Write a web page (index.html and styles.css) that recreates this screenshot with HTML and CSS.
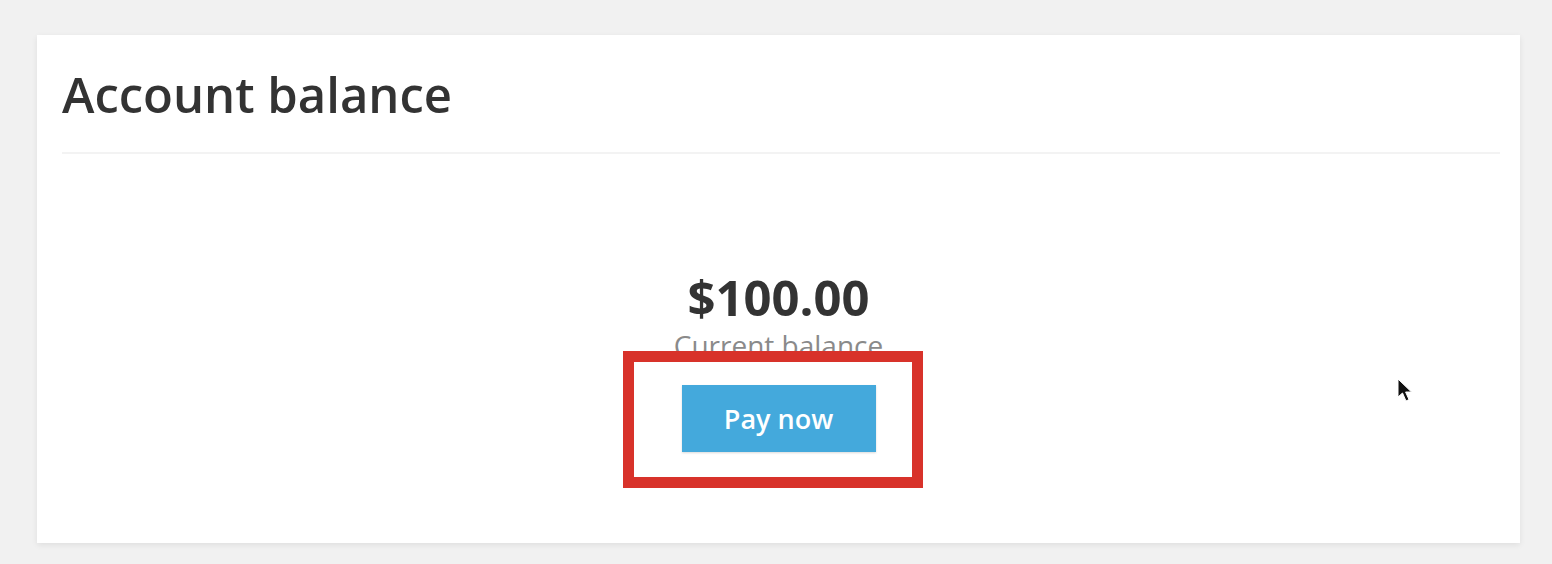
FILE: index.html
```html
<!DOCTYPE html>
<html lang="en">
<head>
  <meta charset="UTF-8">
  <title>Account balance</title>
  <link rel="stylesheet" href="styles.css">
</head>
<body>
  <div class="card">
    <div class="card-header">
      <h1>Account balance</h1>
    </div>
    <div class="card-body">
      <div class="amount">$100.00</div>
      <div class="caption">Current balance</div>
      <div class="action">
        <button class="pay">Pay now</button>
        <span class="highlight"></span>
      </div>
      <svg class="cursor" width="20" height="28" viewBox="0 0 20 28">
        <path d="M2 1 L2 19 L6.5 15 L10 23 L13 21.6 L9.6 14 L15.5 14 Z" fill="#111" stroke="#fff" stroke-width="1"/>
      </svg>
    </div>
  </div>
</body>
</html>
```

FILE: styles.css
```css
body {
  background-color: #f1f1f1;
  font-family: "Open Sans", Arial, sans-serif;
  margin: 0;
  padding: 35px 32px 21px 37px;
}

.card {
  background: #fff;
  height: 508px;
  box-shadow: 0 2px 6px rgba(0, 0, 0, 0.08);
  position: relative;
}

.card-header {
  height: 117px;
  margin: 0 20px 0 25px;
  border-bottom: 2px solid #f3f3f3;
  display: flex;
  align-items: center;
}

h1 {
  margin: 0;
  font-family: "Open Sans", Arial, sans-serif;
  font-weight: 600;
  font-size: 49px;
  color: #333;
}

.card-body {
  display: flex;
  flex-direction: column;
  align-items: center;
  padding-top: 113px;
}

.amount {
  font-size: 49px;
  font-weight: 700;
  color: #333;
  line-height: 60px;
}

.caption {
  font-size: 28px;
  color: #8a8a8a;
  line-height: 32px;
  margin-top: 2px;
}

.action {
  position: relative;
  margin-top: 24px;
}

.pay {
  width: 194px;
  height: 67px;
  background-color: #44a9dc;
  color: #fff;
  border: none;
  font-family: "Open Sans", Arial, sans-serif;
  font-size: 27px;
  font-weight: 600;
  box-shadow: 0 1px 2px rgba(0, 0, 0, 0.15);
}

.highlight {
  position: absolute;
  left: -59px;
  top: -34px;
  width: 278px;
  height: 115px;
  border: 11px solid #d8322a;
}

.cursor {
  position: absolute;
  left: 1359px;
  top: 343px;
}
```
